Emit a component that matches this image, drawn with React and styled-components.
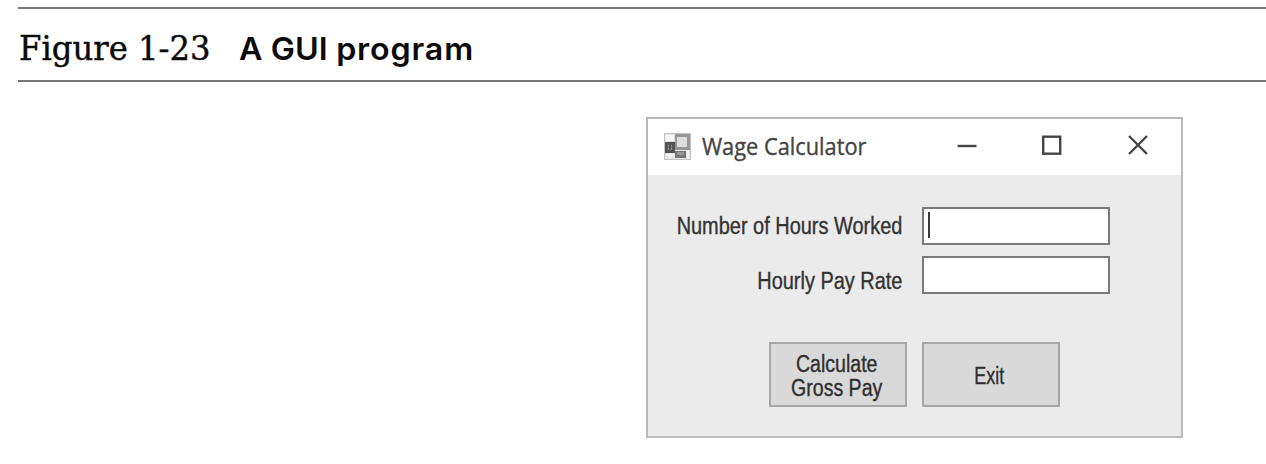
import React from 'react';
import styled, { createGlobalStyle } from 'styled-components';

const Global = createGlobalStyle`
  * { box-sizing: border-box; }
  body { margin: 0; background: #fff; overflow: hidden; }
`;

const Page = styled.main`
  height: 464px;
  padding: 7px 0 0 18px;
  color: #0b0b0b;
`;

const Caption = styled.header`
  display: flex;
  align-items: baseline;
  height: 75px;
  padding: 17px 0 0 1px;
  border-top: 2px solid #767676;
  border-bottom: 2px solid #767676;
  line-height: 44px;
  white-space: nowrap;
`;

const FigureNumber = styled.span`
  width: 220px;
  font-family: "DejaVu Serif Condensed", "DejaVu Serif", serif;
  font-stretch: condensed;
  font-size: 34px;
  -webkit-text-stroke: 0.4px #0b0b0b;
  transform: scaleX(1.056);
  transform-origin: left;
`;

const FigureTitle = styled.h1`
  margin: 0;
  font: 600 31px/44px Inter, sans-serif;
  letter-spacing: 0.1px;
  transform: scaleX(1.04);
  transform-origin: left;
`;

const TitleWord = styled.span`
  letter-spacing: 0.8px;
`;

const Window = styled.section`
  display: flex;
  flex-direction: column;
  width: 537px;
  height: 321px;
  margin: 35px 0 0 628px;
  border: 2px solid #b9b9b9;
  background: #ebebeb;
`;

const TitleBar = styled.div`
  display: flex;
  align-items: center;
  height: 56px;
  padding: 0 32px 2px 16px;
  background: #fff;
`;

const WindowTitle = styled.span`
  flex: 1;
  margin-left: 11px;
  color: #444;
  font: 23px/32px "Open Sans", sans-serif;
  -webkit-text-stroke: 0.35px #444;
  white-space: nowrap;
  transform: scaleX(0.947);
  transform-origin: left;
`;

const Controls = styled.div`
  display: flex;
  gap: 64px;
`;

const Form = styled.div`
  display: grid;
  grid-template-columns: 254px 188px;
  grid-template-rows: 38px 38px;
  gap: 11px 20px;
  padding-top: 32px;
`;

const Label = styled.label`
  justify-self: end;
  padding-top: ${(p) => p.$drop}px;
  color: #333;
  font: 23px/24px "Liberation Sans", sans-serif;
  -webkit-text-stroke: 0.35px #333;
  white-space: nowrap;
  transform: scaleX(0.867);
  transform-origin: right;
`;

const Field = styled.div`
  padding: 3px 4px;
  border: 2px solid #7a7a7a;
  background: #fff;
`;

const Caret = styled.div`
  width: 2px;
  height: 26px;
  background: #3a3a3a;
`;

const Actions = styled.div`
  display: flex;
  gap: 15px;
  padding: 48px 0 0 121px;
`;

const Button = styled.button`
  display: flex;
  align-items: center;
  justify-content: center;
  width: 138px;
  height: 65px;
  padding: 2px 3px 0 0;
  border: 2px solid #a6a6a6;
  border-radius: 0;
  background: #d9d9d9;
  color: #2e2e2e;
  font: 23px/24px "Liberation Sans", sans-serif;
  -webkit-text-stroke: 0.35px #2e2e2e;
`;

const ButtonText = styled.span`
  transform: scaleX(${(p) => p.$scale});
  white-space: nowrap;
`;

function FormIcon() {
  return (
    <svg width="27" height="27" viewBox="0 0 27 27">
      <rect x="0.5" y="0.5" width="26" height="26" fill="#e4e4e4" stroke="#c4c4c4" />
      <rect x="2" y="2" width="8" height="6" fill="#fafafa" />
      <rect x="11" y="1" width="15" height="16" fill="#969696" />
      <rect x="13" y="4" width="10" height="10" fill="#dedede" />
      <rect x="1" y="9" width="10" height="11" fill="#555" />
      <rect x="4" y="12" width="4" height="5" fill="#999" />
      <path d="M6 12v5M4.500 14h3" stroke="#303030" strokeWidth="1.2" />
      <rect x="11" y="18" width="11" height="7" fill="#777" />
      <rect x="13" y="19" width="7" height="3" fill="#999" />
      <path d="M2 22h8M6 20v6M24 18v8" stroke="#fff" />
    </svg>
  );
}

function Glyph({ children }) {
  return (
    <svg width="22" height="22" viewBox="0 0 22 22" fill="none" stroke="#444" strokeWidth="2.4">
      {children}
    </svg>
  );
}

export default function App() {
  return (
    <Page>
      <Global />
      <Caption>
        <FigureNumber>Figure 1-23</FigureNumber>
        <FigureTitle>A GUI <TitleWord>program</TitleWord></FigureTitle>
      </Caption>
      <Window>
        <TitleBar>
          <FormIcon />
          <WindowTitle>Wage Calculator</WindowTitle>
          <Controls>
            <Glyph><path d="M2.500 11h19" /></Glyph>
            <Glyph><rect x="2.200" y="1.700" width="17" height="17" /></Glyph>
            <Glyph><path d="M2 1l18 18M20 1L2 19" /></Glyph>
          </Controls>
        </TitleBar>
        <Form>
          <Label $drop={7}>Number of Hours Worked</Label>
          <Field><Caret /></Field>
          <Label $drop={13}>Hourly Pay Rate</Label>
          <Field />
        </Form>
        <Actions>
          <Button><ButtonText $scale={0.85}>Calculate<br />Gross Pay</ButtonText></Button>
          <Button><ButtonText $scale={0.78}>Exit</ButtonText></Button>
        </Actions>
      </Window>
    </Page>
  );
}
